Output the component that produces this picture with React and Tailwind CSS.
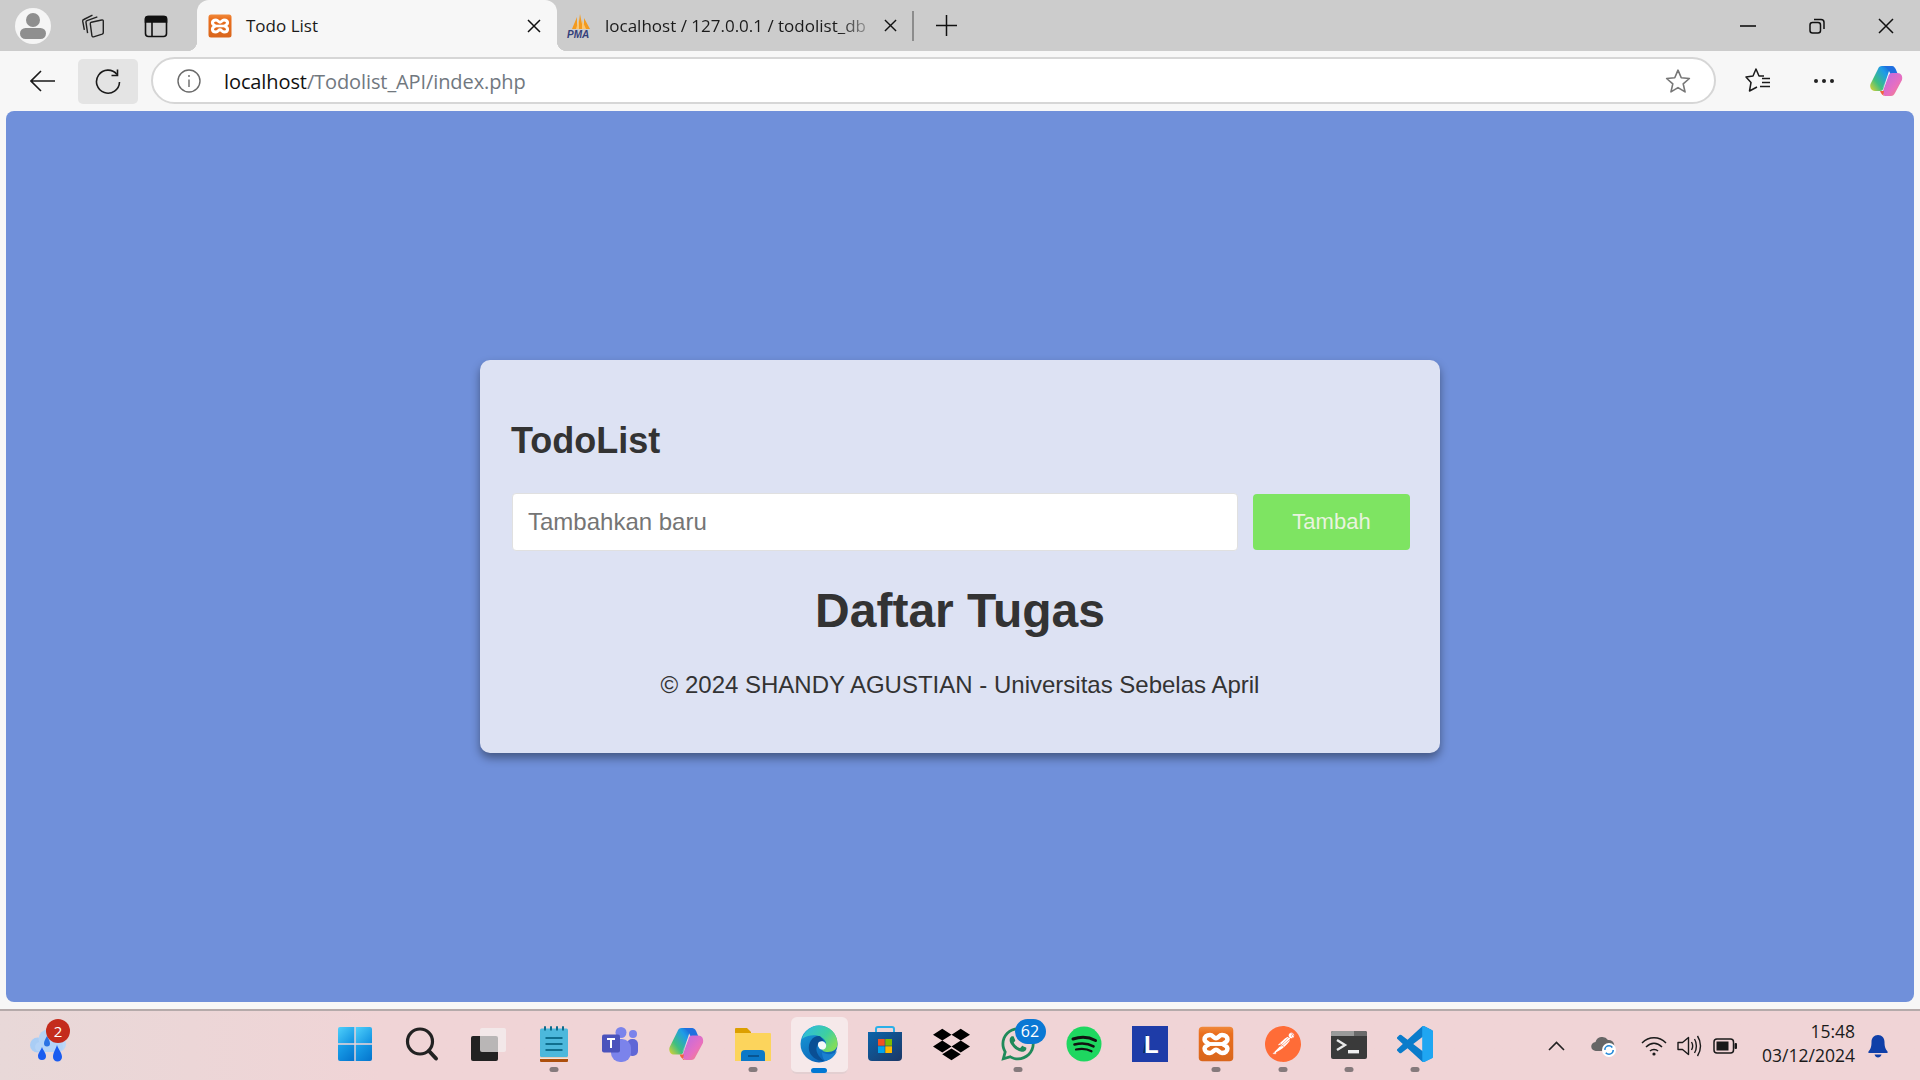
import React from "react";
import { FaDropbox, FaWhatsapp } from "react-icons/fa";
import { SiPostman } from "react-icons/si";

const uiFont = "font-['Open_Sans',sans-serif]";

const XamppIcon = ({ size }) => (
  <svg className="shrink-0" width={size} height={size} viewBox="0 0 24 24">
    <defs>
      <linearGradient id={"xampp" + size} x1="0" y1="0" x2="0" y2="1">
        <stop offset="0" stopColor="#f08a3c" />
        <stop offset="0.2" stopColor="#ea6f1e" />
        <stop offset="1" stopColor="#d9661c" />
      </linearGradient>
    </defs>
    <rect x="0.5" y="0.5" width="23" height="23" rx="2.5" fill={"url(#xampp" + size + ")"} />
    <path d="M8 6C10 6 10.5 8.2 12 8.2S14 6 16 6C18.3 6 19.6 7.3 19.6 9C19.6 10.7 17.6 11 16.8 12C17.6 13 19.6 13.3 19.6 15C19.6 16.7 18.3 18 16 18C14 18 13.5 15.8 12 15.8S10 18 8 18C5.7 18 4.4 16.7 4.4 15C4.4 13.3 6.4 13 7.2 12C6.4 11 4.4 10.7 4.4 9C4.4 7.3 5.7 6 8 6Z" fill="none" stroke="#fff" strokeWidth="3" />
    <path d="M8 12H16" stroke="#fff" strokeWidth="2.6" />
  </svg>
);

const CopilotIcon = ({ size }) => (
  <svg width={size} height={size} viewBox="1 2 34 32">
    <defs>
      <linearGradient id={"copA" + size} x1="0" y1="1" x2="1" y2="0">
        <stop offset="0" stopColor="#e6d22e" />
        <stop offset="0.35" stopColor="#3fbf7f" />
        <stop offset="0.75" stopColor="#1f9be8" />
        <stop offset="1" stopColor="#1a66d6" />
      </linearGradient>
      <linearGradient id={"copB" + size} x1="0" y1="0" x2="1" y2="1">
        <stop offset="0" stopColor="#b66be8" />
        <stop offset="0.6" stopColor="#e86fc0" />
        <stop offset="1" stopColor="#f58a6a" />
      </linearGradient>
    </defs>
    <path d="M14 3C12 3 10.5 4.2 10 6L2.5 21C1.5 24 3 28 7 28H12C14 28 15 27 15.6 25L21 8C21.8 5.4 20 3 18 3Z" fill={"url(#copA" + size + ")"} />
    <path d="M14 3H24C26 3 27.5 5 28.5 8L31 14H24L21 8C20.2 5.5 17 3 14 3Z" fill="#1f6fe0" />
    <path d="M23 33C25 33 26 32 27 30L34 17C35 13 33 10 29.5 10H24C22 10 21 11 20.4 13L15 28C14 31 16 33 18 33Z" fill={"url(#copB" + size + ")"} />
    <path d="M12 28H16L15 33H18C15 33 13 31 12 28Z" fill="#f2643c" />
    <path d="M15 25L20 13" stroke="#fff" strokeWidth="0.6" opacity="0.4" />
  </svg>
);

const StartIcon = () => (
  <svg width="36" height="36" viewBox="0 0 36 36">
    <defs>
      <linearGradient id="winTop" x1="0" y1="0" x2="1" y2="1">
        <stop offset="0" stopColor="#4fd0fb" />
        <stop offset="1" stopColor="#0f8fe0" />
      </linearGradient>
      <linearGradient id="winBot" x1="0" y1="0" x2="1" y2="1">
        <stop offset="0" stopColor="#1ba4ec" />
        <stop offset="1" stopColor="#0473cc" />
      </linearGradient>
    </defs>
    <path d="M1 3A2 2 0 0 1 3 1H17.3V17.3H1Z" fill="url(#winTop)" />
    <path d="M18.7 1H33A2 2 0 0 1 35 3V17.3H18.7Z" fill="url(#winTop)" />
    <path d="M1 18.7H17.3V35H3A2 2 0 0 1 1 33Z" fill="url(#winBot)" />
    <path d="M18.7 18.7H35V33A2 2 0 0 1 33 35H18.7Z" fill="url(#winBot)" />
  </svg>
);

const SearchIcon = () => (
  <svg width="36" height="36" viewBox="-1.5 0 36 36" fill="none" stroke="#222" strokeLinecap="round">
    <circle cx="15.5" cy="15.5" r="12.5" strokeWidth="3.2" />
    <path d="M24.5 25L31.5 32.5" strokeWidth="4" />
  </svg>
);

const TaskViewIcon = () => (
  <svg width="36" height="36" viewBox="0 0 36 36">
    <rect x="1" y="10" width="27" height="25" rx="2" fill="#222" />
    <rect x="10" y="2" width="26" height="24" rx="2" fill="#f4f0f0" opacity="0.72" />
  </svg>
);

const NotepadIcon = () => (
  <svg width="28" height="36" viewBox="0 0 28 30" preserveAspectRatio="none">
    <rect x="0" y="2" width="28" height="24" rx="1.5" fill="#4cb8dc" />
    <rect x="0" y="26" width="28" height="4" rx="1" fill="#ad4f0c" />
    <rect x="0" y="26" width="28" height="1.5" fill="#f3e3d8" />
    <path d="M5 3V1M11 3V1M17 3V1M23 3V1" stroke="#0d6b8c" strokeWidth="2" strokeLinecap="round" />
    <path d="M5.5 10H22.5M5.5 15H22.5M5.5 20H22.5" stroke="#0f6f8f" strokeWidth="1.5" />
  </svg>
);

const TeamsIcon = () => (
  <svg width="36" height="36" viewBox="0 0 36 36">
    <circle cx="31" cy="8" r="4" fill="#7b83eb" />
    <rect x="25" y="13" width="11" height="17" rx="5" fill="#5f67d6" />
    <circle cx="19" cy="6.5" r="5.5" fill="#7b83eb" />
    <rect x="9" y="13" width="20" height="23" rx="9" fill="#7b83eb" />
    <rect x="0" y="8.5" width="18" height="18" rx="2" fill="#4b53bc" />
    <path d="M5 13H13M9 13V22" stroke="#fff" strokeWidth="2" />
  </svg>
);

const FolderIcon = () => (
  <svg width="36" height="36" viewBox="0 0 36 36">
    <path d="M0 3A1 1 0 0 1 1 2H12L16 6V12H0Z" fill="#dc9f00" />
    <path d="M0 7H35A1 1 0 0 1 36 8V35H0Z" fill="#fcd45c" />
    <path d="M6 35V28A4 4 0 0 1 10 24H26A4 4 0 0 1 30 28V35Z" fill="#0c79c8" />
    <path d="M13 30H24" stroke="#08528c" strokeWidth="1.8" />
  </svg>
);

const EdgeIcon = () => (
  <svg width="38" height="38" viewBox="0 0 38 38">
    <defs>
      <linearGradient id="edgeBase" x1="0" y1="0" x2="0.6" y2="1">
        <stop offset="0" stopColor="#1aa0d8" />
        <stop offset="1" stopColor="#0b62b8" />
      </linearGradient>
      <linearGradient id="edgeTop" x1="0" y1="0" x2="1" y2="0.6">
        <stop offset="0" stopColor="#2db8e8" />
        <stop offset="0.65" stopColor="#3ecfa0" />
        <stop offset="1" stopColor="#7fdc5c" />
      </linearGradient>
    </defs>
    <circle cx="19" cy="19" r="18.5" fill="url(#edgeBase)" />
    <path d="M2 14C5 5 12 .5 19 .5C30 .5 37.5 9 37.5 19C37.5 24 33 27 28 27C24 27 21 25.5 22 23C26 22 27 19 25 15.5C22 11 15 9 8 11C5 12 3 13 2 14Z" fill="url(#edgeTop)" />
    <path d="M19 11C12 11 8 18 9 25C10 31 16 36 24 36C18 31 15 26 17 21C18 18 21 16 24 16C22 13 20.5 11 19 11Z" fill="#0a4f94" />
    <path d="M25 36C31 35 35 31 37 26C33 30 26 30 22 27C22 31 23 34 25 36Z" fill="#1a80d0" />
    <path d="M19 17C23 15 27 18 26 22C25 25 22 25 20 24C18 22 17 19 19 17Z" fill="#f5f9fb" />
  </svg>
);

const StoreIcon = () => (
  <svg width="36" height="36" viewBox="0 0 36 36">
    <defs>
      <linearGradient id="storeBody" x1="0" y1="0" x2="1" y2="1">
        <stop offset="0" stopColor="#0b64aa" />
        <stop offset="1" stopColor="#1c3766" />
      </linearGradient>
    </defs>
    <path d="M9 9V3A2 2 0 0 1 11 1H25A2 2 0 0 1 27 3V9" fill="none" stroke="#2bb0e8" strokeWidth="2" />
    <path d="M1 6H35V31A4 4 0 0 1 31 35H5A4 4 0 0 1 1 31Z" fill="url(#storeBody)" />
    <rect x="11" y="13" width="6.7" height="6.7" fill="#f25022" />
    <rect x="18.3" y="13" width="6.7" height="6.7" fill="#7fba00" />
    <rect x="11" y="20.3" width="6.7" height="6.7" fill="#00a4ef" />
    <rect x="18.3" y="20.3" width="6.7" height="6.7" fill="#ffb900" />
  </svg>
);

const SpotifyIcon = () => (
  <svg width="36" height="36" viewBox="0 0 36 36" fill="none" stroke="#111" strokeLinecap="round">
    <circle cx="18" cy="18" r="17.5" fill="#1ed760" stroke="none" />
    <path d="M7 13C14 10.8 23 11 29.5 14.5" strokeWidth="3" />
    <path d="M8.5 18.5C14.5 17 22 17.3 27.5 20.3" strokeWidth="2.6" />
    <path d="M10 23.5C15 22.4 21 22.7 25.5 25.3" strokeWidth="2.2" />
  </svg>
);

const LIcon = () => (
  <svg width="36" height="36" viewBox="0 0 36 36">
    <rect width="36" height="36" fill="#1e3ca8" />
    <path d="M11 27L14 9H15V27Z" fill="#0c2c5c" />
    <text x="12" y="27" fontFamily="'Liberation Sans', sans-serif" fontWeight="700" fontSize="24" fill="#fff">L</text>
  </svg>
);

const PostmanIcon = () => (
  <span className="relative flex w-[36px] h-[36px] items-center justify-center">
    <span className="absolute w-[26px] h-[26px] rounded-full bg-white"></span>
    <SiPostman className="relative" size={36} color="#ff6c37" />
  </span>
);

const TerminalIcon = () => (
  <svg width="36" height="36" viewBox="0 0 36 36">
    <path d="M0 7A2 2 0 0 1 2 5H34A2 2 0 0 1 36 7V31A2 2 0 0 1 34 33H2A2 2 0 0 1 0 31Z" fill="#3a3a3a" />
    <path d="M0 7A2 2 0 0 1 2 5H23V10H0Z" fill="#9a9a9a" />
    <path d="M23 5H34A2 2 0 0 1 36 7V10H23Z" fill="#6a6a6a" />
    <path d="M6 14L14 19L6 24" fill="none" stroke="#e8e8e8" strokeWidth="2.4" />
    <rect x="17" y="24" width="11" height="3.4" fill="#f0f0f0" />
  </svg>
);

const VscodeIcon = () => (
  <svg width="36" height="36" viewBox="0 0 100 100">
    <defs>
      <clipPath id="vsRight">
        <rect x="70" y="0" width="30" height="100" />
      </clipPath>
    </defs>
    <path fill="#0a7ccb" d="M96.46 10.8 75.86.87a6.23 6.23 0 0 0-7.1 1.2L29.3 38.1 12.1 25.05a4.16 4.16 0 0 0-5.32.24l-5.5 5a4.17 4.17 0 0 0 0 6.16L16.2 50 1.28 63.55a4.17 4.17 0 0 0 0 6.16l5.5 5a4.16 4.16 0 0 0 5.32.24l17.2-13.05 39.46 36a6.22 6.22 0 0 0 7.1 1.2l20.6-9.91A6.25 6.25 0 0 0 100 83.55V16.45a6.25 6.25 0 0 0-3.54-5.65ZM75 72.7 45.06 50 75 27.3Z" />
    <path clipPath="url(#vsRight)" fill="#1fa6f2" d="M96.46 10.8 75.86.87a6.23 6.23 0 0 0-7.1 1.2L70 100l6 0 20.46-9.6A6.25 6.25 0 0 0 100 83.55V16.45a6.25 6.25 0 0 0-3.54-5.65Z" />
  </svg>
);

const WeatherIcon = () => (
  <svg width="38" height="36" viewBox="0 0 38 36">
    <circle cx="8.5" cy="18" r="7.5" fill="#a9cdf5" />
    <circle cx="19" cy="12" r="9.5" fill="#b4d3f7" />
    <circle cx="29" cy="17" r="8" fill="#bcd7f8" />
    <rect x="6" y="15" width="28" height="10" rx="5" fill="#b4d3f7" />
    <path d="M18 9C19.5 12 21 14 21 16.5A3 3 0 0 1 15 16.5C15 14 16.5 12 18 9Z" fill="#2a72e4" />
    <path d="M13 20C14.5 24 17 26 17 29A4 4 0 0 1 9 29C9 26 11.5 24 13 20Z" fill="#1a5cf0" />
    <path d="M28 18C29.5 23 33 25.5 33 30A4.5 4.5 0 0 1 24 30C24 25.5 26.5 23 28 18Z" fill="#1a5cf0" />
  </svg>
);

const TaskItem = ({ children, dot, active, badge }) => (
  <div className="relative w-[66.25px] h-full flex items-center justify-center">
    {active && (
      <div className="absolute left-[5px] right-[4px] top-[6px] bottom-[6px] rounded-[6px] bg-[#f6e9ea] border-b-2 border-[#e3cfd1]"></div>
    )}
    <div className="relative flex items-center justify-center -mt-[3px]">{children}</div>
    {badge && (
      <div className={`absolute left-[30px] top-[8px] w-[31px] h-[25px] rounded-full bg-[#0a78d4] text-white text-[16px] leading-[25px] text-center ${uiFont}`}>
        {badge}
      </div>
    )}
    {dot && <div className="absolute left-1/2 -translate-x-1/2 bottom-[8px] w-[9px] h-[5px] rounded-full bg-[#857a7c]"></div>}
    {active && <div className="absolute left-1/2 -translate-x-1/2 bottom-[7px] w-[16px] h-[5px] rounded-full bg-[#0078d4]"></div>}
  </div>
);

export default function App() {
  return (
    <div className="w-[1920px] h-[1080px] flex flex-col overflow-hidden bg-[#f7f7f7]">
      {/* tab strip */}
      <div className="h-[51px] flex items-stretch bg-[#cccccc] shrink-0">
        <div className="w-[197px] flex items-center pl-[15px]">
          <div className="w-[36px] h-[36px] rounded-full bg-[#f5f5f5] flex flex-col items-center justify-center">
            <div className="w-[14px] h-[14px] rounded-full bg-[#8f8f8f]"></div>
            <div className="w-[26px] h-[11px] mt-[1px] rounded-[7px] bg-[#8f8f8f]"></div>
          </div>
          <svg className="ml-[29px]" width="26" height="26" viewBox="0 0 24 24" fill="none" stroke="#222" strokeWidth="1.3" strokeLinejoin="round">
            <path d="M10.5 8.5L20 6.5A1 1 0 0 1 21.5 7.5V18A1.5 1.5 0 0 1 20.5 19.5L12.5 22A1.2 1.2 0 0 1 11 21L9.5 10A1.5 1.5 0 0 1 10.5 8.5Z" />
            <path d="M7 18.5L5.5 8.5A1.5 1.5 0 0 1 6.5 7L16 3.5" />
            <path d="M4 15.5L2.5 7.5A1.5 1.5 0 0 1 3.5 6L11.5 2" />
          </svg>
          <svg className="ml-[38px]" width="24" height="24" viewBox="0 0 24 24" fill="none" stroke="#111" strokeWidth="1.6">
            <rect x="1.5" y="2.5" width="21" height="20" rx="3" />
            <path d="M1.5 4.5A2 2 0 0 1 3.5 2.5H20.5A2 2 0 0 1 22.5 4.5V8H1.5Z" fill="#111" />
            <path d="M8 8V22" />
          </svg>
        </div>

        {/* active tab */}
        <div className="relative w-[360px] bg-[#f7f7f7] rounded-t-[12px] flex items-center pl-[11px] pr-[16px]">
          <span className="absolute left-[-10px] bottom-0 w-[10px] h-[10px] bg-[radial-gradient(circle_at_0_0,#cccccc_10px,#f7f7f7_10.5px)]"></span>
          <span className="absolute right-[-10px] bottom-0 w-[10px] h-[10px] bg-[radial-gradient(circle_at_100%_0,#cccccc_10px,#f7f7f7_10.5px)]"></span>
          <XamppIcon size={24} />
          <span className={`ml-[14px] flex-1 text-[17px] text-[#1a1a1a] ${uiFont}`}>Todo List</span>
          <svg width="14" height="14" viewBox="0 0 14 14" stroke="#111" strokeWidth="1.5">
            <path d="M1 1L13 13M13 1L1 13" />
          </svg>
        </div>

        {/* second tab */}
        <div className="w-[410px] shrink-0 flex items-center pl-[9px]">
          <svg className="shrink-0" width="26" height="26" viewBox="0 0 26 26">
            <path d="M6 16L11 4L11 16ZM12 16L14 1L17 16ZM18 16L18 5L24 16Z" fill="#f39a1e" />
            <path d="M10 16L13 6L13 16ZM16 16L16 7L20 16Z" fill="#fbc670" />
            <text x="1" y="25" fontFamily="'Liberation Sans', sans-serif" fontWeight="700" fontStyle="italic" fontSize="10" fill="#34407a">PMA</text>
          </svg>
          <span className={`ml-[13px] w-[265px] shrink-0 whitespace-nowrap text-[17px] text-transparent bg-clip-text bg-gradient-to-r from-[#1a1a1a] from-[88%] to-[#a8a8a8] ${uiFont}`}>localhost / 127.0.0.1 / todolist_db</span>
          <svg className="ml-[14px] shrink-0" width="13" height="13" viewBox="0 0 14 14" stroke="#111" strokeWidth="1.5">
            <path d="M1 1L13 13M13 1L1 13" />
          </svg>
          <div className="ml-[15px] w-[2px] h-[30px] bg-[#8c8c8c] shrink-0"></div>
          <svg className="ml-[22px] shrink-0" width="21" height="21" viewBox="0 0 21 21" stroke="#111" strokeWidth="1.5">
            <path d="M10.5 0V21M0 10.5H21" />
          </svg>
        </div>

        <div className="flex-1"></div>

        {/* window controls */}
        <div className="flex items-center pr-[26px]">
          <svg width="16" height="16" viewBox="0 0 16 16" stroke="#111" strokeWidth="1.6">
            <path d="M0 8H16" />
          </svg>
          <svg className="ml-[53px]" width="16" height="16" viewBox="0 0 16 16" fill="none" stroke="#111" strokeWidth="1.5">
            <rect x="1" y="4.5" width="10.5" height="10.5" rx="2.5" />
            <path d="M5 1.5H12A3 3 0 0 1 15 4.5V11" />
          </svg>
          <svg className="ml-[53px]" width="16" height="16" viewBox="0 0 16 16" stroke="#111" strokeWidth="1.5">
            <path d="M1 1L15 15M15 1L1 15" />
          </svg>
        </div>
      </div>

      {/* address bar */}
      <div className="h-[60px] shrink-0 flex items-start pt-[6px]">
        <div className="w-[78px] h-[47px] flex items-center pl-[30px]">
          <svg width="25" height="22" viewBox="0 0 25 22" fill="none" stroke="#1a1a1a" strokeWidth="1.6">
            <path d="M25 11H1M11 1L1 11L11 21" />
          </svg>
        </div>
        <div className="w-[60px] h-[45px] mt-[2px] rounded-[5px] bg-[#e4e4e4] flex items-center justify-center">
          <svg width="26" height="26" viewBox="0 0 26 26" fill="none" stroke="#1a1a1a" strokeWidth="1.6">
            <path d="M22 5.5A11.5 11.5 0 1 0 24.5 13" />
            <path d="M22.5 0.5V6.5H16.5" />
          </svg>
        </div>
        <div className="ml-[13px] w-[1565px] h-[47px] rounded-full border-2 border-[#d6d6d6] bg-white flex items-center pl-[24px] pr-[23px]">
          <svg width="24" height="24" viewBox="0 0 24 24" fill="none" stroke="#6a6a6a" strokeWidth="1.4">
            <circle cx="12" cy="12" r="11" />
            <path d="M12 10.5V18M12 6V8" />
          </svg>
          <span className={`ml-[23px] flex-1 pt-[2px] text-[20px] tracking-[-0.1px] text-[#71787f] ${uiFont}`}>
            <span className="text-[#111]">localhost</span>/Todolist_API/index.php
          </span>
          <svg width="26" height="26" viewBox="0 0 24 24" fill="none" stroke="#777" strokeWidth="1.5" strokeLinejoin="round">
            <path d="M12 2L15 9L22.5 9.7L16.8 14.6L18.5 22L12 18.1L5.5 22L7.2 14.6L1.5 9.7L9 9Z" />
          </svg>
        </div>
        <svg className="ml-[29px] mt-[10px]" width="26" height="26" viewBox="0 0 26 26" fill="none" stroke="#1a1a1a" strokeWidth="1.5" strokeLinejoin="round">
          <path d="M19 9H14L11 2L8 9L1 10L6 15.5L4.5 24L12 20" />
          <path d="M17 11.5H25M17 15.5H25M15 19.5H25" />
        </svg>
        <div className="ml-[43px] mt-[22px] flex gap-[4px]">
          <div className="w-[4px] h-[4px] rounded-full bg-[#222]"></div>
          <div className="w-[4px] h-[4px] rounded-full bg-[#222]"></div>
          <div className="w-[4px] h-[4px] rounded-full bg-[#222]"></div>
        </div>
        <div className="ml-[35px] mt-[7px]">
          <CopilotIcon size={34} />
        </div>
      </div>

      {/* page */}
      <div className="h-[891px] mx-[6px] rounded-[8px] bg-[#7090da] flex items-center justify-center shrink-0 font-['Liberation_Sans',sans-serif]">
        <div className="w-[960px] h-[393px] rounded-[10px] bg-[#dde2f3] p-[30px] text-center text-[#333333] shadow-[0_5px_10px_rgba(0,0,0,0.4)]">
          <h2 className="mt-[31px] mb-[32px] ml-[1px] text-[36px] leading-[40px] font-bold text-left">TodoList</h2>
          <div className="flex items-center">
            <input
              type="text"
              placeholder="Tambahkan baru"
              className="w-[726px] h-[58px] ml-[2px] px-[15px] rounded-[4px] border border-[#e0e0e0] bg-white text-[24px] placeholder:text-[#757575] outline-none"
            />
            <button className="ml-[15px] w-[157px] h-[56px] pb-[1px] rounded-[4px] bg-[#7ee462] text-[#e9f3df] text-[22px]">Tambah</button>
          </div>
          <h1 className="mt-[32px] text-[48px] leading-[55px] font-bold">Daftar Tugas</h1>
          <p className="mt-[33px] text-[24px] leading-[28px]">© 2024 SHANDY AGUSTIAN - Universitas Sebelas April</p>
        </div>
      </div>

      <div className="h-[7px] shrink-0 bg-[#f7f7f7]"></div>

      {/* taskbar */}
      <div className="flex-1 flex items-stretch bg-gradient-to-r from-[#e8d8d8] via-[#f0d4d6] via-[20%] to-[#f0d4d6] border-t-[2px] border-[#b5aaaa]">
        <div className="w-[322px] flex items-center pl-[29px]">
          <div className="relative -mt-[2px]">
            <WeatherIcon />
            <div className={`absolute left-[17px] top-[-8px] w-[24px] h-[24px] rounded-full bg-[#c42b1c] text-white text-[15px] leading-[24px] text-center ${uiFont}`}>2</div>
          </div>
        </div>
        <div className="flex items-stretch">
          <TaskItem><StartIcon /></TaskItem>
          <TaskItem><SearchIcon /></TaskItem>
          <TaskItem><TaskViewIcon /></TaskItem>
          <TaskItem dot><NotepadIcon /></TaskItem>
          <TaskItem><TeamsIcon /></TaskItem>
          <TaskItem><CopilotIcon size={36} /></TaskItem>
          <TaskItem dot><FolderIcon /></TaskItem>
          <TaskItem active><EdgeIcon /></TaskItem>
          <TaskItem><StoreIcon /></TaskItem>
          <TaskItem><FaDropbox size={37} color="#000" /></TaskItem>
          <TaskItem dot badge="62"><FaWhatsapp size={38} color="#1f8a5a" /></TaskItem>
          <TaskItem><SpotifyIcon /></TaskItem>
          <TaskItem><LIcon /></TaskItem>
          <TaskItem dot><XamppIcon size={36} /></TaskItem>
          <TaskItem dot><PostmanIcon /></TaskItem>
          <TaskItem dot><TerminalIcon /></TaskItem>
          <TaskItem dot><VscodeIcon /></TaskItem>
        </div>
        <div className="flex-1 flex items-center justify-end pr-[32px]">
          <svg width="17" height="10" viewBox="0 0 17 10" fill="none" stroke="#222" strokeWidth="1.6">
            <path d="M1 9L8.5 1.5L16 9" />
          </svg>
          <svg className="ml-[26px]" width="26" height="22" viewBox="0 0 26 22">
            <path d="M5 16A4.5 4.5 0 0 1 4.5 7A7 7 0 0 1 17 5A5.5 5.5 0 0 1 23 12V16Z" fill="#666" />
            <circle cx="18" cy="15" r="7" fill="#fff" />
            <circle cx="18" cy="15" r="4.2" fill="none" stroke="#1f86d8" strokeWidth="1.6" strokeDasharray="10 3" />
          </svg>
          <svg className="ml-[24px]" width="26" height="20" viewBox="0 0 26 20" fill="none" stroke="#1a1a1a" strokeWidth="1.5">
            <path d="M1 7C8 0 18 0 25 7M5 11C10 6 16 6 21 11M9 15C11 13 15 13 17 15" />
            <circle cx="13" cy="18" r="1.6" fill="#1a1a1a" stroke="none" />
          </svg>
          <svg className="ml-[10px]" width="25" height="24" viewBox="0 0 25 24" fill="none" stroke="#1a1a1a" strokeWidth="1.4" strokeLinejoin="round">
            <path d="M1 8.5H5.5L11.5 3.5V20.5L5.5 15.5H1Z" />
            <path d="M14.5 8C16 10.5 16 13.5 14.5 16M17.5 5C20 9 20 15 17.5 19M20.5 2C24.5 8 24.5 16 20.5 22" />
          </svg>
          <svg className="ml-[11px]" width="24" height="16" viewBox="0 0 24 16">
            <rect x="1" y="1" width="19.5" height="14" rx="3" fill="none" stroke="#1a1a1a" strokeWidth="1.5" />
            <rect x="3.5" y="3.5" width="12" height="9" fill="#1a1a1a" />
            <rect x="21.5" y="5" width="2.5" height="6" rx="1" fill="#1a1a1a" />
          </svg>
          <div className={`ml-[25px] -mt-[4px] flex flex-col items-end text-[17.5px] leading-[23.5px] text-[#1a1a1a] ${uiFont}`}>
            <span>15:48</span>
            <span>03/12/2024</span>
          </div>
          <svg className="ml-[13px]" width="20" height="24" viewBox="0 0 20 24">
            <path d="M10 1C6 1 3.5 4 3.5 8C3.5 13 2.5 15 0.5 17.5C0 18.5 .5 19 1.5 19H18.5C19.5 19 20 18.5 19.5 17.5C17.5 15 16.5 13 16.5 8C16.5 4 14 1 10 1Z" fill="#0f3fa8" />
            <path d="M6.5 20.5H13.5C13 22.5 11.5 23.5 10 23.5S7 22.5 6.5 20.5Z" fill="#0f3fa8" />
          </svg>
        </div>
      </div>
    </div>
  );
}
